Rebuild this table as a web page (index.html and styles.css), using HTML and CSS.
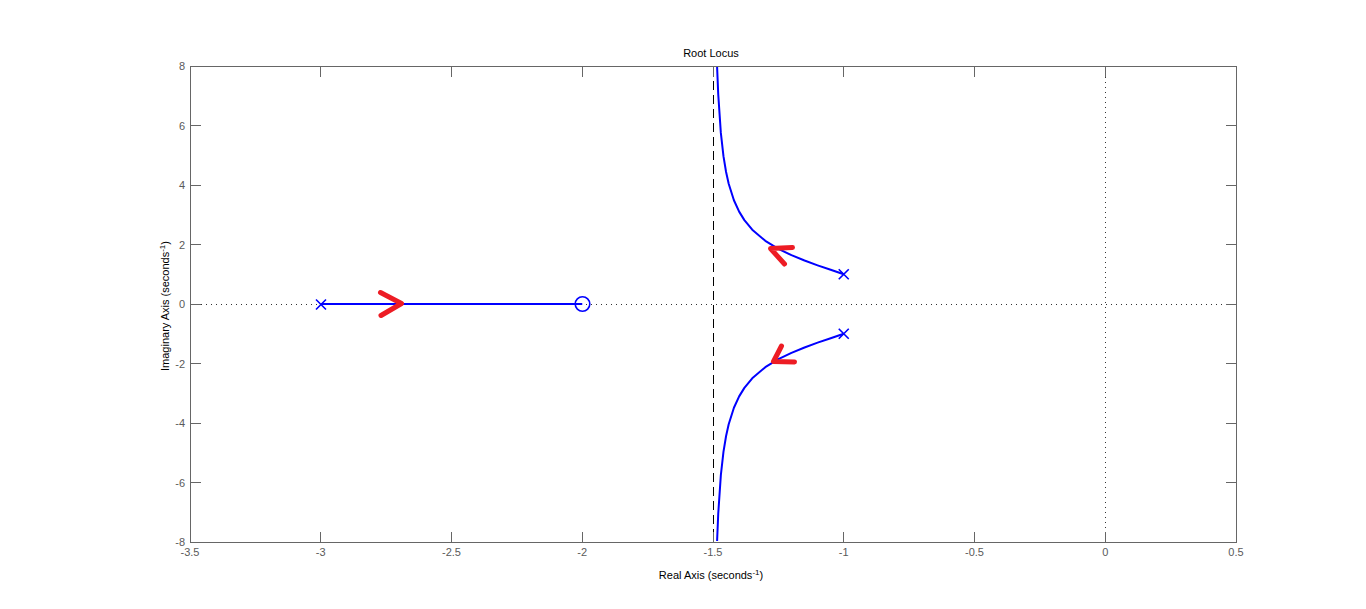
FILE: index.html
```html
<!DOCTYPE html>
<html lang="en">
<head>
<meta charset="utf-8">
<title>Root Locus</title>
<link rel="stylesheet" href="styles.css">
</head>
<body>
<main class="figure">
<svg class="plot" width="1366" height="609" viewBox="0 0 1366 609" xmlns="http://www.w3.org/2000/svg">
  <text class="title" x="711" y="57">Root Locus</text>

  <!-- reference lines -->
  <line class="dotted" x1="191" y1="304.5" x2="1236" y2="304.5"/>
  <line class="dotted" x1="1105.5" y1="67" x2="1105.5" y2="542"/>
  <line class="dashed" x1="713.5" y1="67" x2="713.5" y2="542"/>

  <!-- axes box -->
  <rect class="axes" x="190.5" y="66.5" width="1046" height="476"/>

  <!-- x ticks -->
  <path class="tick" d="M320.5,542V532M451.5,542V532M582.5,542V532M713.5,542V532M843.5,542V532M974.5,542V532M1105.5,542V532
                        M320.5,67V77M451.5,67V77M582.5,67V77M713.5,67V77M843.5,67V77M974.5,67V77M1105.5,67V77"/>
  <!-- y ticks -->
  <path class="tick" d="M191,125.5H201M191,185.5H201M191,244.5H201M191,304.5H201M191,363.5H201M191,423.5H201M191,482.5H201
                        M1236,125.5H1226M1236,185.5H1226M1236,244.5H1226M1236,304.5H1226M1236,363.5H1226M1236,423.5H1226M1236,482.5H1226"/>

  <g class="xlabels">
    <text x="190" y="556">-3.5</text>
    <text x="320.75" y="556">-3</text>
    <text x="451.5" y="556">-2.5</text>
    <text x="582.25" y="556">-2</text>
    <text x="713" y="556">-1.5</text>
    <text x="843.75" y="556">-1</text>
    <text x="974.5" y="556">-0.5</text>
    <text x="1105.25" y="556">0</text>
    <text x="1236" y="556">0.5</text>
  </g>
  <g class="ylabels">
    <text x="185" y="70">8</text>
    <text x="185" y="129.5">6</text>
    <text x="185" y="189">4</text>
    <text x="185" y="248.5">2</text>
    <text x="185" y="308">0</text>
    <text x="185" y="367.5">-2</text>
    <text x="185" y="427">-4</text>
    <text x="185" y="486.5">-6</text>
    <text x="185" y="546">-8</text>
  </g>

  <text class="label" x="711" y="579">Real Axis (seconds<tspan class="sup" dy="-4">-1</tspan><tspan dy="4">)</tspan></text>
  <text class="label" transform="translate(169 306) rotate(-90)" x="0" y="0">Imaginary Axis (seconds<tspan class="sup" dy="-4">-1</tspan><tspan dy="4">)</tspan></text>

  <!-- locus branches -->
  <g class="locus">
    <path d="M320.75,304 L582.25,304"/>
    <path d="M843.75,274.25 L830.68,269.82 L817.6,265.33 L804.53,260.54 L791.45,255.18 L778.38,248.84 L765.3,240.81 L752.23,229.65 L744.38,220.1 L739.15,211.63 L733.92,200.23 L728.69,183.72 L726.08,171.97 L723.46,156.14 L720.85,132.94 L718.23,94.26 L717.1,67"/>
    <path d="M843.75,333.75 L830.68,338.18 L817.6,342.67 L804.53,347.46 L791.45,352.82 L778.38,359.16 L765.3,367.19 L752.23,378.35 L744.38,387.9 L739.15,396.37 L733.92,407.77 L728.69,424.28 L726.08,436.03 L723.46,451.86 L720.85,475.06 L718.23,513.74 L717.1,541"/>
  </g>

  <!-- poles and zero -->
  <g class="marker">
    <path d="M316,299.5L326,309.5M326,299.5L316,309.5"/>
    <path d="M838.75,269.25L848.75,279.25M848.75,269.25L838.75,279.25"/>
    <path d="M838.75,328.75L848.75,338.75M848.75,328.75L838.75,338.75"/>
    <circle cx="582.5" cy="304" r="7.3"/>
  </g>

  <!-- hand-drawn direction arrows -->
  <g class="arrow">
    <path d="M380.5,292.5 L401.5,303.5 L381,315.5"/>
    <path d="M792.5,247.5 L770.5,248.5 L784.5,264"/>
    <path d="M781.5,346 L773.5,361.5 L794.5,362"/>
  </g>
</svg>
</main>
</body>
</html>
```

FILE: styles.css
```css
html, body {
  margin: 0;
  padding: 0;
  background: #ffffff;
}

.figure {
  width: 1366px;
  height: 609px;
  overflow: hidden;
  background: #ffffff;
}

.plot {
  display: block;
  font-family: "Liberation Sans", Arial, sans-serif;
}

.title {
  font-size: 11px;
  fill: #000000;
  text-anchor: middle;
}

.label {
  font-size: 11px;
  fill: #000000;
  text-anchor: middle;
}

.sup {
  font-size: 8px;
}

.xlabels text {
  font-size: 11px;
  fill: #5a5a5a;
  text-anchor: middle;
}

.ylabels text {
  font-size: 11px;
  fill: #5a5a5a;
  text-anchor: end;
}

.axes {
  fill: none;
  stroke: #666666;
  stroke-width: 1;
  shape-rendering: crispEdges;
}

.tick {
  fill: none;
  stroke: #666666;
  stroke-width: 1;
  shape-rendering: crispEdges;
}

.dotted {
  stroke: #333333;
  stroke-width: 1;
  stroke-dasharray: 1 4;
  shape-rendering: crispEdges;
}

.dashed {
  stroke: #000000;
  stroke-width: 1;
  stroke-dasharray: 9 5;
  shape-rendering: crispEdges;
}

.locus path {
  fill: none;
  stroke: #0000ff;
  stroke-width: 2;
  stroke-linejoin: round;
}

.marker path,
.marker circle {
  fill: none;
  stroke: #0000ff;
  stroke-width: 1.6;
}

.arrow path {
  fill: none;
  stroke: #ed1c24;
  stroke-width: 5;
  stroke-linecap: round;
  stroke-linejoin: round;
}
```
